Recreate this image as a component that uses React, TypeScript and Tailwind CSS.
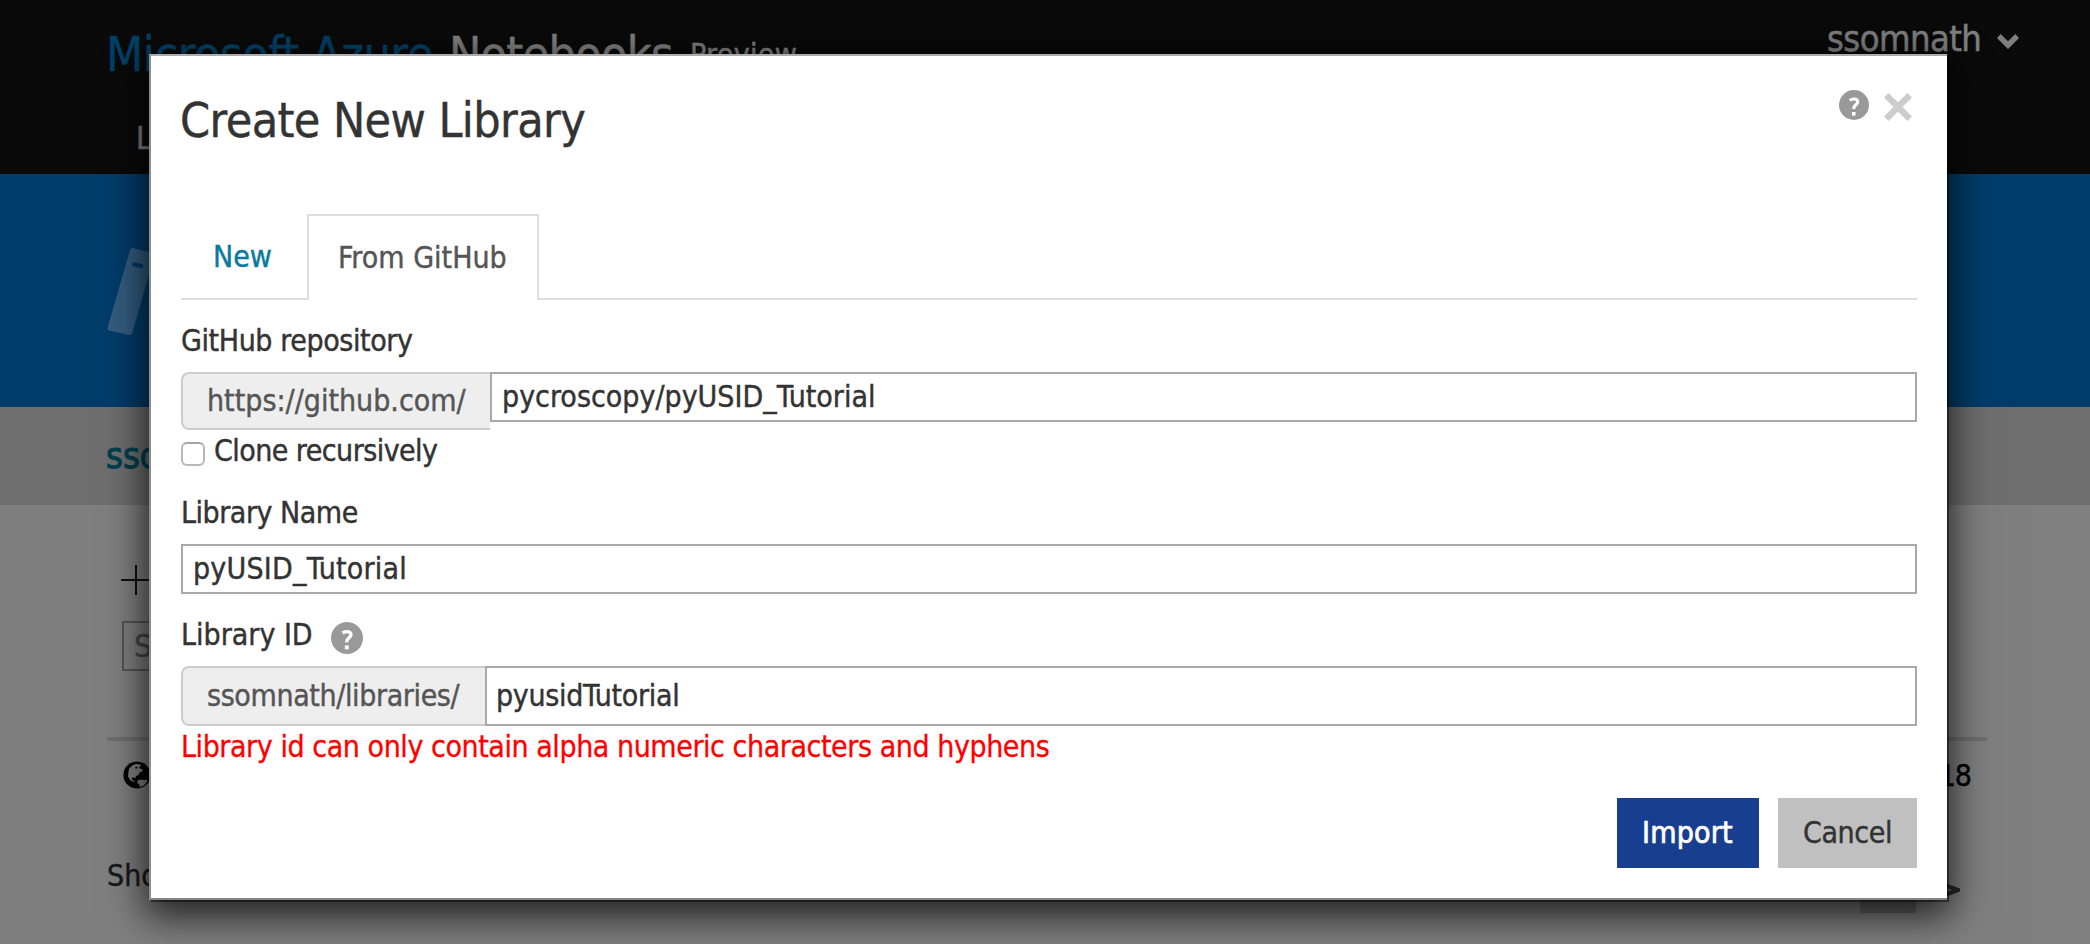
import React from 'react';

function HelpIcon({ className }: { className: string }) {
  return (
    <svg viewBox="0 0 30 30" className={className} aria-label="Help">
      <circle cx="15" cy="15" r="15" fill="#999" />
      <path d="M10.800 10.400c1.200-1 2.600-1.400 4-1.400 2.400 0 3.900 1.100 3.900 2.900 0 2.900-3.900 3-3.900 6.600v.6" fill="none" stroke="#fff" strokeWidth="3.200" />
      <rect x="13" y="22" width="3.600" height="3.600" fill="#fff" />
    </svg>
  );
}

function Globe() {
  return (
    <svg viewBox="0 0 28 28" className="size-7 shrink-0">
      <circle cx="14" cy="14" r="13.600" fill="#000" />
      <path d="M6 7.500 10 4l4-1.200 3 .7 1.500 1.500-2 1 1.500 2 2 .2-1 2.300-2.500 1.200-1 2.300-2.500 1 -.6 2-1.700-.6-2.200.6 1 2.200 1.700.6-.4 1.200-3-1.200L5 15.500 5.500 11z" fill="#fff" />
      <path d="M14.500 19.500l3-1 3.500.4 3.500-.4-1 3-2.700 3-3.500 1.800-1-2.500-2-2z" fill="#fff" />
      <path d="M12 6.500l2-1 .5 1.500-1.500.8zM16 6l2-.5 1 1.500-2 .5z" fill="#000" />
    </svg>
  );
}

function Page() {
  return (
    <div className="flex h-[944px] flex-col bg-white text-black">
      <header className="flex h-[174px] shrink-0 flex-col bg-[#141414] text-white">
        <div className="flex h-[110px] items-start justify-between pl-[106px] pr-[71px]">
          <div className="flex items-start pt-[26px] text-5xl leading-[56px]">
            <span className="w-[343px] tracking-[-0.4px] text-[#0080cc]">Microsoft Azure</span>
            <span className="w-[241px] tracking-[-0.68px]">Notebooks</span>
            <span className="pt-px text-[30px] tracking-[0.3px]">Preview</span>
          </div>
          <div className="flex items-start pt-[19px]">
            <span className="w-[170px] text-4xl leading-10 tracking-[-0.55px]">ssomnath</span>
            <svg viewBox="0 0 22 15" className="mt-[15px] h-[15px] w-[22px]">
              <path d="M0 4 3.700 0 11 7.300 18.300 0 22 4 11 15z" fill="#fff" />
            </svg>
          </div>
        </div>
        <nav className="pl-[136px] pt-[8px] text-[32px] leading-10">L</nav>
      </header>
      <section className="h-[233px] shrink-0 bg-[#0078d4] pl-[107px] pt-[74px]">
        <svg viewBox="0 0 48 90" className="h-[90px] w-12">
          <path d="M25.500 0 46 5q2 .5 1.500 2.500L25 85.500q-.5 2-2.500 1.500L2 82.500Q0 82 .5 80L23 2q.5-2 2.500-2z" fill="#66b8ff" />
          <path d="M26 14 36.500 16.500 35.500 20.500 25 18z" fill="#0078d4" />
        </svg>
      </section>
      <section className="flex h-[98px] shrink-0 items-center pl-[106px] bg-[#dcdcdc] text-4xl text-[#00809f] [-webkit-text-stroke:1px_#00809f]">sso</section>
      <main className="flex flex-col pl-[107px] pr-[103px]">
        <div className="flex h-[116px] flex-col pl-[14px] pt-[60px]">
          <svg viewBox="0 0 30 30" className="size-[30px]">
            <path d="M0 15H30M15 0V30" stroke="#222" strokeWidth="2" />
          </svg>
        </div>
        <div className="ml-[15px] flex h-[50px] w-96 items-center border-2 border-[#aaa] pl-[10px] text-[32px] text-[#8a8a8a]">S</div>
        <div className="mt-[66px] h-1 bg-[#dcdcdc]" />
        <div className="flex h-[115px] items-start justify-between pl-4 pr-[16px] pt-5">
          <Globe />
          <span className="-mt-[3px] text-[30px] leading-[36px] tracking-[-1px]">18</span>
        </div>
        <div className="flex h-[57px] items-start justify-between">
          <span className="pt-[2px] text-[30px] leading-[36px] text-[#333]">Sho</span>
          <div className="flex">
            <div className="h-[57px] w-14 bg-black/20" />
            <div className="flex w-[71px] justify-end pr-[27px] pt-[25px]">
              <svg viewBox="0 0 22 18" className="h-[18px] w-[22px]">
                <path d="M1 2 20 9 1 16" fill="none" stroke="#505050" strokeWidth="4" />
              </svg>
            </div>
          </div>
        </div>
      </main>
    </div>
  );
}

function Dialog() {
  return (
    <div className="ml-[149px] mt-[54px] flex h-[846px] w-[1798px] flex-col border-y-2 border-l-2 border-b-[#858585] border-l-[#8f8f8f] border-t-[#ababab] bg-white pl-[30px] pr-[30px] text-[30px] leading-9 text-[#333] shadow-[2px_2px_0_rgba(0,0,0,0.45),0_12px_36px_4px_rgba(0,0,0,0.75)]">
      <div className="flex h-[158px] shrink-0 items-start justify-between">
        <h1 className="-ml-px pt-[36px] text-5xl leading-[56px] tracking-[-0.6px]">Create New Library</h1>
        <div className="flex gap-[15px] pr-[5px] pt-[34px]">
          <HelpIcon className="size-[30px]" />
          <svg viewBox="0 0 28 28" className="mt-[3px] size-7">
            <path d="M2.300 2.300 25.700 25.700M25.700 2.300 2.300 25.700" stroke="#ccc" strokeWidth="6.500" />
          </svg>
        </div>
      </div>

      <div className="flex h-[86px] shrink-0">
        <div className="flex w-[126px] items-center border-b-2 border-[#ddd] pl-[32px] pt-[2px] text-[#087a9e]">New</div>
        <div className="flex w-[232px] items-center border-2 border-b-0 border-[#ddd] pb-px pl-[29px] text-[#555]">From GitHub</div>
        <div className="grow border-b-2 border-[#ddd]" />
      </div>

      <label className="flex h-[72px] shrink-0 items-center pt-[10px] tracking-[-0.41px]">GitHub repository</label>
      <div className="flex h-[58px] shrink-0 items-start">
        <span className="flex h-[58px] w-[309px] items-center rounded-l-lg border-2 border-r-0 border-[#ccc] bg-[#eee] pl-6 text-[#555]">https://github.com/</span>
        <div className="flex h-[50px] grow items-center border-2 border-[#a9a9a9] pl-[10px]">pycroscopy/pyUSID_Tutorial</div>
      </div>
      <div className="flex h-[43px] shrink-0 items-center pb-px tracking-[-0.55px]">
        <span className="mr-[9px] mt-[6px] size-6 rounded-md border-2 border-[#b8b8b8] border-t-[#a5a5a5] bg-white" />
        Clone recursively
      </div>

      <label className="flex h-[71px] shrink-0 items-center pt-2 tracking-[-0.48px]">Library Name</label>
      <div className="flex h-[50px] shrink-0 items-center border-2 border-[#a9a9a9] pl-[10px] tracking-[0.2px]">pyUSID_Tutorial</div>

      <div className="flex h-[72px] shrink-0 items-center pt-[10px]">
        <label className="w-[150px]">Library ID</label>
        <HelpIcon className="mt-[6px] size-8" />
      </div>
      <div className="flex h-[60px] shrink-0">
        <span className="flex w-[304px] items-center rounded-l-lg border-2 border-r-0 border-[#ccc] bg-[#eee] pl-6 tracking-[-0.38px] text-[#555]">ssomnath/libraries/</span>
        <div className="flex grow items-center border-2 border-[#a9a9a9] pl-[9px] tracking-[-0.3px]">pyusidTutorial</div>
      </div>
      <p className="flex h-[42px] shrink-0 items-center tracking-[-0.44px] text-[#ff0000] [-webkit-text-stroke:0.3px_#ff0000]">Library id can only contain alpha numeric characters and hyphens</p>

      <div className="mt-[30px] flex h-[70px] shrink-0 justify-end gap-[19px]">
        <button className="w-[142px] bg-[#183e90] pl-[25px] text-left tracking-[0.2px] text-white [-webkit-text-stroke:0.7px_white]">Import</button>
        <button className="w-[139px] bg-[#c0c0c0] pl-[25px] text-left tracking-[-0.39px]">Cancel</button>
      </div>
    </div>
  );
}

export default function App() {
  return (
    <div className="relative h-[944px] w-[2090px] overflow-hidden font-['DejaVu_Sans_Condensed','DejaVu_Sans',sans-serif] leading-none [-webkit-text-stroke:0.4px_currentColor]">
      <Page />
      <div className="absolute inset-0 bg-black/50">
        <Dialog />
      </div>
    </div>
  );
}
